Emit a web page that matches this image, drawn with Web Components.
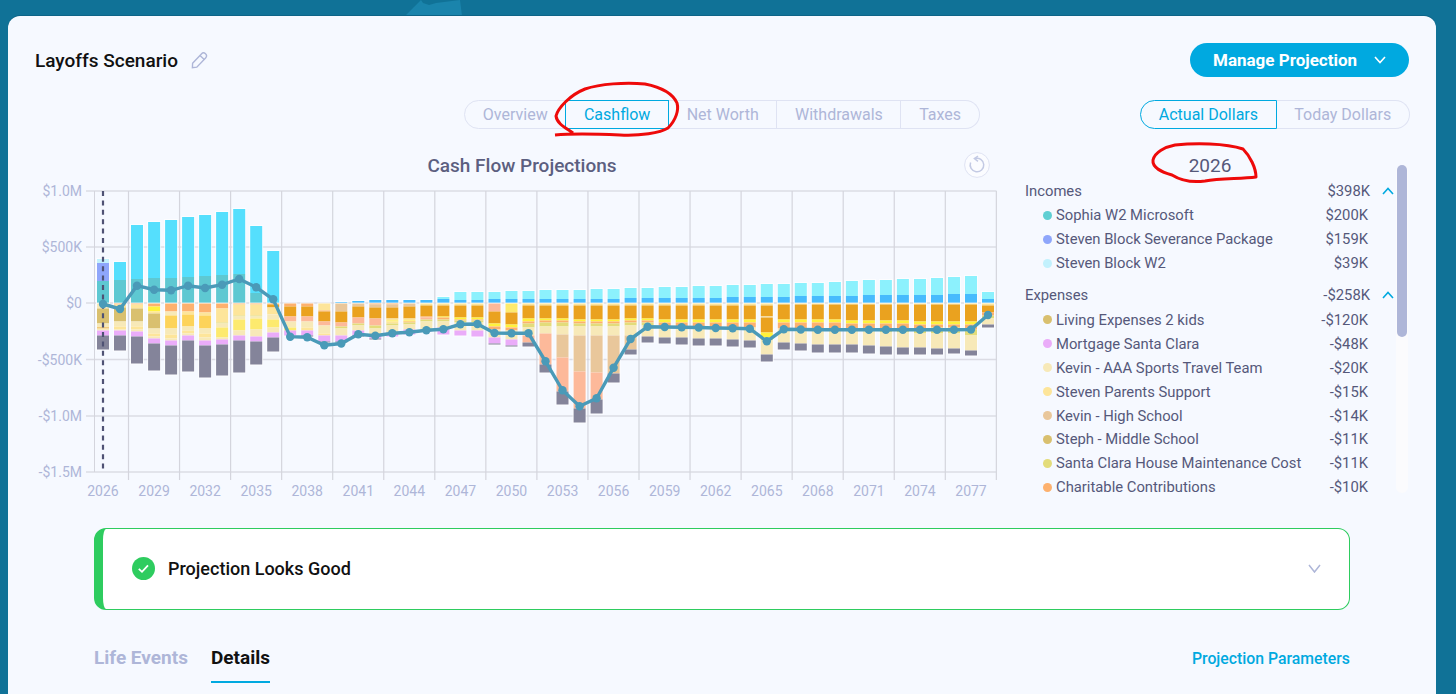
<!DOCTYPE html>
<html lang="en">
<head>
<meta charset="utf-8">
<title>Layoffs Scenario</title>
<style>
    html, body { margin: 0; height: 694px; overflow: hidden; }
    body { background: #107297; font-family: Roboto, "Liberation Sans", sans-serif; }
</style>
</head>
<body>
<scenario-page>
    <scenario-header title="Layoffs Scenario" action="Manage Projection"></scenario-header>
    <div slot="main" style="display:contents">
        <pill-tabs items="Overview|Cashflow|Net Worth|Withdrawals|Taxes" active="1" style="margin-left:429px"></pill-tabs>
        <cash-chart heading="Cash Flow Projections"></cash-chart>
    </div>
    <div slot="side" style="display:contents">
        <pill-tabs items="Actual Dollars|Today Dollars" active="0" style="margin-left:115px"></pill-tabs>
        <legend-panel year="2026">
            <legend-group label="Incomes" amount="$398K">
                <legend-row color="#5fcfd3" amount="$200K">Sophia W2 Microsoft</legend-row>
                <legend-row color="#8ea6fb" amount="$159K">Steven Block Severance Package</legend-row>
                <legend-row color="#c2f1fd" amount="$39K">Steven Block W2</legend-row>
            </legend-group>
            <legend-group label="Expenses" amount="-$258K">
                <legend-row color="#d9c06f" amount="-$120K">Living Expenses 2 kids</legend-row>
                <legend-row color="#eaacf9" amount="-$48K">Mortgage Santa Clara</legend-row>
                <legend-row color="#f7e9b8" amount="-$20K">Kevin - AAA Sports Travel Team</legend-row>
                <legend-row color="#fde59a" amount="-$15K">Steven Parents Support</legend-row>
                <legend-row color="#e9c79b" amount="-$14K">Kevin - High School</legend-row>
                <legend-row color="#d9c06f" amount="-$11K">Steph - Middle School</legend-row>
                <legend-row color="#e3dc7a" amount="-$11K">Santa Clara House Maintenance Cost</legend-row>
                <legend-row color="#fdb16e" amount="-$10K">Charitable Contributions</legend-row>
            </legend-group>
        </legend-panel>
    </div>
    <status-alert slot="bottom">Projection Looks Good</status-alert>
    <detail-tabs slot="bottom" link="Projection Parameters"></detail-tabs>
</scenario-page>
<red-scribbles></red-scribbles>

<script>
const MUTED = "#aeb6d8";
const LINE = "#dfe3f3";
const BLUE = "#00a9e0";
const SLATE = "#55587a";

class ScenarioPage extends HTMLElement {
    constructor() {
        super();
        this.attachShadow({ mode: "open" });
        this.shadowRoot.innerHTML = `
            <style>
                :host { display: block; position: relative; padding: 16px 20px 0 8px; }
                .mark { position: absolute; left: 404px; top: 0; }
                .card {
                    position: relative;
                    height: 700px;
                    box-sizing: border-box;
                    padding: 27px 27px 0;
                    background: #f6f9ff;
                    border-radius: 12px 12px 0 0;
                    box-shadow: 0 -1px 0 #0d6487;
                }
                .columns { display: grid; grid-template-columns: 990px 1fr; margin-top: 23px; height: 404px; }
                .col { min-width: 0; }
                .bottom { margin: 24px 59px 0; }
            </style>
            <svg class="mark" width="60" height="16"><path d="M1 16 L10 7 L17 0 L19 3 L25 5 L32 3 L56 0 L58 16 Z" fill="#1a84ac"/></svg>
            <div class="card">
                <slot></slot>
                <div class="columns">
                    <div class="col"><slot name="main"></slot></div>
                    <div class="col"><slot name="side"></slot></div>
                </div>
                <div class="bottom"><slot name="bottom"></slot></div>
            </div>
        `;
    }
}

class ScenarioHeader extends HTMLElement {
    constructor() {
        super();
        this.attachShadow({ mode: "open" });
        this.shadowRoot.innerHTML = `
            <style>
                :host { display: flex; align-items: center; justify-content: space-between; height: 34px; }
                .name { display: flex; align-items: center; gap: 13px; font-size: 19px; font-weight: 500; color: #111; }
                svg { display: block; }
                button {
                    display: flex; align-items: center; gap: 17px;
                    height: 34px; width: 219px; padding: 0 0 0 23px; box-sizing: border-box;
                    border: 0; border-radius: 17px; background: ${BLUE};
                    font: 700 17px Roboto, sans-serif; color: #fff;
                }
            </style>
            <div class="name">
                <span>${this.getAttribute("title")}</span>
                <svg width="17" height="18" viewBox="0 0 17 18" fill="none" stroke="${MUTED}" stroke-width="1.4">
                    <path d="M1.6 12.2 L10.4 2.9 a2.9 2.9 0 0 1 4.2 4 L5.8 16.2 L1.4 16.8 Z"/>
                    <path d="M9 4.4 L13.2 8.4"/>
                </svg>
            </div>
            <button>
                <span>${this.getAttribute("action")}</span>
                <svg width="12" height="8" viewBox="0 0 12 8" fill="none" stroke="#fff" stroke-width="1.6"><path d="M1 1 L6 6.5 L11 1"/></svg>
            </button>
        `;
    }
}

class PillTabs extends HTMLElement {
    constructor() {
        super();
        this.attachShadow({ mode: "open" });
        const items = this.getAttribute("items").split("|");
        const active = Number(this.getAttribute("active"));
        const cells = items.map((item, i) => `<div class="cell ${i === active ? "on" : ""}">${item}</div>`).join("");
        this.shadowRoot.innerHTML = `
            <style>
                :host { display: inline-flex; height: 29px; font-size: 16px; color: ${MUTED}; vertical-align: top; white-space: nowrap; }
                .cell {
                    display: flex; align-items: center;
                    box-sizing: border-box; padding: 0 17.5px 0 17.8px;
                    border: 1px solid ${LINE}; border-left-width: 0;
                }
                .cell:first-of-type { border-left-width: 1px; border-radius: 15px 0 0 15px; }
                .cell:last-of-type { border-radius: 0 15px 15px 0; }
                .on { color: ${BLUE}; border-color: ${BLUE}; border-left-width: 1px; margin-left: -1px; }
                .on:first-of-type { margin-left: 0; }
            </style>
            ${cells}
        `;
    }
}

class CashChart extends HTMLElement {
    constructor() {
        super();
        this.attachShadow({ mode: "open" });

        this.colors = {
            c: "#55dffd", t: "#5ec8d2", p: "#8ea6fb", l: "#c4f2fd", a: "#8cf1fd", b: "#47bbfd",
            g: "#84849a", m: "#eaacf9", k: "#d9c06f", w: "#f7e9b8", y: "#fdea6e", Y: "#fdd35a",
            s: "#fde59a", o: "#fdb16e", d: "#eaa21f", r: "#fdb99a", n: "#e9c79b", h: "#e3dc7a", z: "#fff23c"
        };

        // one entry per year from 2026: heights in px above | below the zero line
        this.bars = [
            "t22 p18 l4|w5 k15 w4 d1 w2 m5 g14",
            "t23 c18|o1 s3 k14 w5 s3 w1 m5 g15",
            "t24 c54|o1 s4 k13 w5 s3 w2 m5 g27",
            "t25 c56|o3 z5 s2 k15 w5 s3 w2 m5 g27",
            "t25 c58|o8 w4 Y13 w6 s4 w2 m5 g29",
            "t26 c60|o8 s3 Y12 w4 s3 w2 m5 g31",
            "t27 c61|o9 s3 Y13 w5 s4 w3 m5 g32",
            "t28 c63|o5 s14 h1 w4 y10 w2 m5 g31",
            "t29 c65|o1 s11 h1 w3 y11 w5 m5 g32",
            "t10 c67|o1 s11 h1 w2 y11 w7 m5 g23",
            "c52|o1 d3 s7 w5 y8 w5 m5 g14",
            "|o3 d10 r5 w6 y3 m5",
            "|o3 d10 r5 w6 s3 m5 g1",
            "|s7 o1 d10 r4 w8 s2 m6 g1",
            "b1|n8 d11 r4 h2 w7 m6 g1",
            "b2|n3 d11 r6 h2 w5 m5 g1",
            "b3|o1 n3 d11 r7 h3 w6 m4 g1",
            "b3|o1 n3 d11 s2 z1 s2 h2 w7 m4",
            "b3|n3 d12 s2 z1 o1 h2 w5 m5",
            "b3|s2 d11 o1 r2 h2 w9 m1",
            "b4 a2|s2 d11 z1 o2 h2 w6 m7",
            "b3 a8|s2 d12 z2 o1 h2 w8 m5",
            "b3 a8|s2 d12 z2 o1 h2 w8 m6",
            "b4 a7|r8 d12 z3 o3 w8 m6 g1",
            "b4 a8|y9 d12 z3 o3 w9 m6 g1",
            "b4 a8|s2 d13 z3 o2 h4 w8 r7 g4",
            "b4 a9|s2 d13 z2 o2 h4 w7 r31 g8",
            "b4 a9|s2 d13 z2 o2 h4 w8 n23 r34 g13",
            "b4 a9|s2 d14 z2 o2 h3 w9 n36 r37 g14",
            "b4 a10|s2 d14 z2 o2 h3 w9 n37 r27 g14",
            "b4 a10|s2 d14 z2 o2 h3 w9 n38 g9",
            "b5 a10|s2 d13 z2 o2 h3 w10 n14 g5",
            "b5 a10|s2 d13 z2 o2 h3 w11 g6",
            "b5 a11|s2 d14 z3 o5 w10 g6",
            "b5 a11|s2 d14 z3 o5 w10 g7",
            "b5 a12|s2 d14 z3 o5 w11 g7",
            "b5 a12|s2 d14 z3 o5 w11 g7",
            "b6 a12|s2 d14 z3 o5 w12 g7",
            "b6 a12|s2 d14 z3 o5 w13 g7",
            "b6 a13|s2 d11 w1 d15 z5 h3 w14 g7",
            "b6 a13|s1 d15 z3 o6 w14 g7",
            "b7 a13|s1 d15 z3 o6 w15 g7",
            "b7 a13|s1 d15 z3 o6 h1 w15 g8",
            "b7 a14|s1 d15 z3 o6 h1 w15 g8",
            "b7 a15|s1 d16 z3 o5 h3 w13 g8",
            "b8 a15|s1 d16 z3 o5 h3 w14 g8",
            "b8 a15|s1 d16 z3 o5 h4 w14 g8",
            "b8 a16|s1 d16 z3 o5 h4 w15 g7",
            "b8 a16|s1 d17 z3 o4 h5 w14 g7",
            "b8 a17|s1 d17 z3 o3 h6 w15 g6",
            "b9 a17|s1 d17 z3 o3 h6 w15 g5",
            "b9 a18|s1 d17 z3 o5 h6 w15 g5",
            "b4 a7|s2 d7 o3 h3 w6 g3"
        ];

        // net cash line, y position per year
        this.line = [304, 309, 285.7, 289.7, 290.3, 285.7, 288, 284.7, 279, 287.3, 299.3, 336.7, 337.3,
            345.3, 343.5, 334.3, 335.7, 333.3, 332.3, 330.3, 329.3, 324.3, 324, 333, 333.3, 333.3, 361.3,
            390.3, 406.3, 398.3, 367.7, 339, 326.7, 327, 327.3, 327.5, 328, 328.3, 328.7, 341.3, 329.3,
            329.5, 329.7, 329.7, 329.7, 329.7, 329.7, 329.7, 329.7, 329.7, 329.7, 329.5, 315];

        this.shadowRoot.innerHTML = `
            <style>
                :host { display: block; }
                .head {
                    display: grid; grid-template-columns: 1fr auto 1fr; align-items: center;
                    height: 26px; margin-top: 23px; padding: 0 35px 0 19px;
                    font-size: 19px; font-weight: 500; color: #5c5f80;
                }
                .head svg { justify-self: end; display: block; }
                .plot { display: block; }
                text { font: 14px Roboto, sans-serif; fill: ${MUTED}; }
            </style>
            <div class="head">
                <span></span>
                <span>${this.getAttribute("heading")}</span>
                <svg width="26" height="26" viewBox="0 0 26 26" fill="none">
                    <circle cx="13" cy="13" r="12.4" fill="#fbfcff" stroke="${LINE}"/>
                    <path d="M11 6.5 A6.8 6.8 0 1 1 6.6 10.6" stroke="#c3cae4" stroke-width="1.5"/>
                    <path d="M14 4.2 L10.4 6.6 L14 9.4" stroke="#c3cae4" stroke-width="1.5"/>
                </svg>
            </div>
            <svg class="plot" width="990" height="326" viewBox="35 178 990 326">${this.plot()}</svg>
        `;
    }

    plot() {
        const zero = 303;
        const pitch = 17.02;
        const barX = i => 103 + pitch * i;
        let out = "";

        const ticks = [["$1.0M", 191], ["$500K", 247], ["$0", 303], ["-$500K", 359.5], ["-$1.0M", 416], ["-$1.5M", 472]];
        ticks.forEach(([label, y]) => {
            out += `<line x1="86" x2="996.5" y1="${y}" y2="${y}" stroke="#dbdce4" stroke-width="1.4"/>`;
            out += `<text x="82" y="${y + 5}" text-anchor="end">${label}</text>`;
        });

        out += `<line x1="94.5" x2="94.5" y1="191" y2="472" stroke="#d4d5dd"/>`;
        for (let i = 0; i <= 17; i++) {
            const x = 128.5 + i * 51.05;
            out += `<line x1="${x}" x2="${x}" y1="191" y2="480" stroke="#d4d5dd" stroke-width="1.2"/>`;
        }
        for (let i = 0; i < 18; i++) {
            out += `<text x="${barX(i * 3)}" y="496" text-anchor="middle">${2026 + i * 3}</text>`;
        }

        this.bars.forEach((bar, i) => {
            const [above, below] = bar.split("|");
            const x = barX(i) - 6;
            out += this.stack(above, x, zero, -1);
            out += this.stack(below, x, zero + 0.5, 1);
        });

        out += `<line x1="103" x2="103" y1="191" y2="469" stroke="#4f5274" stroke-width="2.2" stroke-dasharray="5 4.4"/>`;

        const points = this.line.map((y, i) => `${barX(i).toFixed(1)},${y}`).join(" ");
        out += `<polyline points="${points}" fill="none" stroke="#4a9ab8" stroke-width="3.4"/>`;
        this.line.forEach((y, i) => {
            out += `<circle cx="${barX(i).toFixed(1)}" cy="${y}" r="4.2" fill="#4a9ab8"/>`;
        });
        return out;
    }

    stack(spec, x, start, direction) {
        if (!spec) return "";
        let y = start;
        let segments = "";
        spec.split(" ").forEach(part => {
            const height = Number(part.slice(1));
            const top = direction < 0 ? y - height : y;
            segments += `<rect x="${x.toFixed(1)}" y="${top}" width="12" height="${height}" fill="${this.colors[part[0]]}"/>`;
            y += direction * height;
        });
        const outerTop = Math.min(start, y);
        const outer = Math.abs(y - start);
        return `<rect x="${(x - 1).toFixed(1)}" y="${outerTop - 1}" width="14" height="${outer + 2}" fill="#fff" opacity=".7"/>` + segments;
    }
}

class LegendPanel extends HTMLElement {
    constructor() {
        super();
        this.attachShadow({ mode: "open" });
        this.shadowRoot.innerHTML = `
            <style>
                :host { display: flex; height: 352px; margin-top: 23px; width: 384px; overflow: hidden; font-size: 14.8px; color: ${SLATE}; }
                .content { width: 370px; margin-right: 1px; }
                .year { box-sizing: border-box; height: 26px; padding-top: 1px; line-height: 26px; margin-bottom: 1px; text-align: center; font-size: 19px; }
                .track { width: 12px; height: 328px; margin-top: 13px; background: #fbfbfd; border-radius: 6px; }
                .thumb { width: 10px; height: 172px; margin: 0 1px; background: ${MUTED}; border-radius: 5px; }
            </style>
            <div class="content">
                <div class="year">${this.getAttribute("year")}</div>
                <slot></slot>
            </div>
            <div class="track"><div class="thumb"></div></div>
        `;
    }
}

class LegendGroup extends HTMLElement {
    constructor() {
        super();
        this.attachShadow({ mode: "open" });
        this.shadowRoot.innerHTML = `
            <style>
                :host { display: block; margin-bottom: 8px; }
                .top { display: flex; align-items: center; height: 24px; margin-bottom: 0.5px; }
                .label { flex: 1; }
                svg { margin: 0 1px 0 12px; }
            </style>
            <div class="top">
                <span class="label">${this.getAttribute("label")}</span>
                <span>${this.getAttribute("amount")}</span>
                <svg width="12" height="8" viewBox="0 0 12 8" fill="none" stroke="${BLUE}" stroke-width="1.6"><path d="M1 7 L6 1.5 L11 7"/></svg>
            </div>
            <slot></slot>
        `;
    }
}

class LegendRow extends HTMLElement {
    constructor() {
        super();
        this.attachShadow({ mode: "open" });
        this.shadowRoot.innerHTML = `
            <style>
                :host { display: flex; align-items: center; height: 23.95px; padding: 0 27px 0 18px; }
                i { width: 9px; height: 9px; margin-right: 4px; border-radius: 50%; background: ${this.getAttribute("color")}; }
                .name { flex: 1; }
            </style>
            <i></i>
            <span class="name"><slot></slot></span>
            <span>${this.getAttribute("amount")}</span>
        `;
    }
}

class StatusAlert extends HTMLElement {
    constructor() {
        super();
        this.attachShadow({ mode: "open" });
        this.shadowRoot.innerHTML = `
            <style>
                :host {
                    display: flex; align-items: center; gap: 13px;
                    box-sizing: border-box; height: 82px; padding: 0 28px 1px 29px;
                    background: #fff; border: 1.5px solid #2ecc5f; border-left-width: 9px; border-radius: 12px;
                    font-size: 18px; font-weight: 500; color: #111;
                }
                span { flex: 1; }
            </style>
            <svg width="23" height="23" viewBox="0 0 23 23">
                <circle cx="11.5" cy="11.5" r="11.5" fill="#2ecc5f"/>
                <path d="M6.8 11.8 L10 14.8 L16 8.4" fill="none" stroke="#fff" stroke-width="1.8"/>
            </svg>
            <span><slot></slot></span>
            <svg width="13" height="9" viewBox="0 0 13 9" fill="none" stroke="${MUTED}" stroke-width="1.5"><path d="M1 1 L6.5 8 L12 1"/></svg>
        `;
    }
}

class DetailTabs extends HTMLElement {
    constructor() {
        super();
        this.attachShadow({ mode: "open" });
        this.shadowRoot.innerHTML = `
            <style>
                :host { display: flex; align-items: flex-start; gap: 23px; height: 43px; margin-top: 30px; font-size: 19px; font-weight: 700; color: ${MUTED}; }
                .tab { height: 36px; line-height: 36px; }
                .on { color: #111; box-sizing: content-box; padding-bottom: 5px; border-bottom: 2px solid ${BLUE}; }
                a { margin-left: auto; line-height: 38px; font-size: 15.8px; font-weight: 500; color: ${BLUE}; }
            </style>
            <div class="tab">Life Events</div>
            <div class="tab on">Details</div>
            <a>${this.getAttribute("link")}</a>
        `;
    }
}

class RedScribbles extends HTMLElement {
    constructor() {
        super();
        this.attachShadow({ mode: "open" });
        this.shadowRoot.innerHTML = `
            <style>
                :host { position: absolute; left: 0; top: 0; pointer-events: none; }
                svg { display: block; }
            </style>
            <svg width="1456" height="694" fill="none" stroke="#ee0a0a" stroke-width="3" stroke-linejoin="round">
                <path d="M555 135 C575 133 600 134 620 135 C640 136 660 133 668 128 C676 120 679 110 677 103 C672 92 660 87 645 84 C625 82 600 84 585 89 C570 95 558 108 556 116 C557 124 566 128 573 133"/>
                <path d="M1175 145 C1195 143 1225 143 1243 149 C1250 156 1256 168 1256 177 C1240 179 1220 178 1205 181 C1190 183 1180 180 1172 175 C1162 172 1152 168 1153 160 C1155 152 1165 147 1175 145 Z"/>
            </svg>
        `;
    }
}

customElements.define("scenario-page", ScenarioPage);
customElements.define("scenario-header", ScenarioHeader);
customElements.define("pill-tabs", PillTabs);
customElements.define("cash-chart", CashChart);
customElements.define("legend-panel", LegendPanel);
customElements.define("legend-group", LegendGroup);
customElements.define("legend-row", LegendRow);
customElements.define("status-alert", StatusAlert);
customElements.define("detail-tabs", DetailTabs);
customElements.define("red-scribbles", RedScribbles);
</script>
</body>
</html>
